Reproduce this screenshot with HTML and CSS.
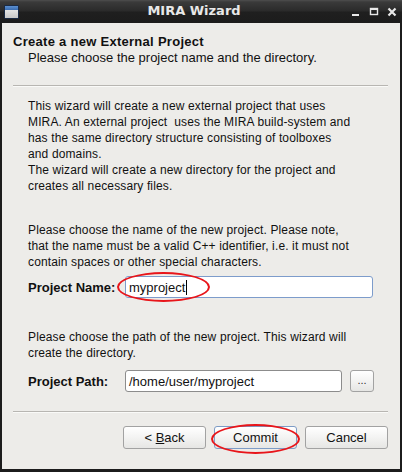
FILE: index.html
```html
<!DOCTYPE html>
<html>
<head>
<meta charset="utf-8">
<link rel="stylesheet" href="styles.css">
</head>
<body>
<div class="window">
  <div class="titlebar">
    <div class="app-icon"><div class="app-icon-top"></div></div>
    <div class="title">MIRA Wizard</div>
    <div class="controls">
      <svg class="ctl" width="10" height="10" viewBox="0 0 10 10"><rect x="1" y="7" width="7" height="2" fill="#e8e8e8"/></svg>
      <svg class="ctl" width="10" height="10" viewBox="0 0 10 10"><rect x="1.5" y="1.5" width="7" height="6" fill="none" stroke="#e8e8e8" stroke-width="1.4"/><rect x="1" y="1" width="8" height="2" fill="#e8e8e8"/></svg>
      <svg class="ctl" width="10" height="10" viewBox="0 0 10 10"><path d="M1.5 1.5 L8.5 8.5 M8.5 1.5 L1.5 8.5" stroke="#e8e8e8" stroke-width="2.2"/></svg>
    </div>
  </div>
  <div class="client">
    <div class="header">
      <div class="h-title">Create a new External Project</div>
      <div class="h-sub">Please choose the project name and the directory.</div>
    </div>
    <div class="sep"></div>
    <div class="body">
      <p class="para p1">This wizard will create a new external project that uses<br>MIRA. An external project &nbsp;uses the MIRA build-system and<br>has the same directory structure consisting of toolboxes<br>and domains.<br>The wizard will create a new directory for the project and<br>creates all necessary files.</p>
      <p class="para p2">Please choose the name of the new project. Please note,<br>that the name must be a valid C++ identifier, i.e. it must not<br>contain spaces or other special characters.</p>
      <div class="row row-name">
        <div class="label">Project Name:</div>
        <div class="input focused"><span>myproject</span><span class="caret"></span></div>
        <div class="ellipse e-name"></div>
      </div>
      <p class="para p3">Please choose the path of the new project. This wizard will<br>create the directory.</p>
      <div class="row row-path">
        <div class="label">Project Path:</div>
        <div class="input path"><span>/home/user/myproject</span></div>
        <div class="btn small">...</div>
      </div>
    </div>
    <div class="sep sep2"></div>
    <div class="buttons">
      <div class="btn"><span>&lt;&nbsp;<u>B</u>ack</span></div>
      <div class="btn default"><span>Commit</span><div class="ellipse e-commit"></div></div>
      <div class="btn"><span>Cancel</span></div>
    </div>
  </div>
</div>
</body>
</html>
```
FILE: styles.css
```css
* { box-sizing: border-box; }
html, body { margin: 0; padding: 0; }
body { width: 402px; height: 472px; overflow: hidden; background: #1a1a1a; font-family: "Liberation Sans", Arial, sans-serif; font-size: 12px; color: #111; }
.window { width: 402px; height: 472px; display: flex; flex-direction: column; background: #1c1c1c; }
.titlebar { height: 23px; display: flex; align-items: center; position: relative; background: linear-gradient(#4e4e4e 0px, #3a3a3a 2px, #2a2a2a 11px, #1f1f1f 12px, #1c1c1c 23px); }
.app-icon { width: 15px; height: 14px; margin-left: 4px; border-radius: 1px; background: linear-gradient(#f2f2f2, #c8c8c8); border: 1px solid #1a2a44; overflow: hidden; }
.app-icon-top { height: 4px; background: linear-gradient(#5a8fd0, #3b6db0); }
.title { position: absolute; left: 0; right: 0; top: 0; height: 23px; line-height: 22px; text-align: center; color: #e8e8e8; font-weight: bold; font-size: 13px; font-family: "DejaVu Sans", sans-serif; pointer-events: none; padding-right: 14px; }
.controls { margin-left: auto; display: flex; gap: 8px; margin-right: 5px; align-items: center; }
.ctl { display: block; }
.client { flex: 1; margin: 0 2px 3px 2px; background: #edece9; display: flex; flex-direction: column; }
.header { padding: 11px 0 0 11px; line-height: 16px; }
.h-title { font-weight: bold; font-size: 13px; letter-spacing: 0.28px; }
.h-sub { padding-left: 15px; font-size: 13px; }
.sep { height: 2px; margin: 19px 12px 0 11px; border-top: 1px solid #b8b6b2; border-bottom: 1px solid #fafaf8; }
.body { padding: 11px 0 0 26px; }
.para { margin: 0; line-height: 16px; letter-spacing: 0.13px; }
.p2 { margin-top: 28px; }
.p3 { margin-top: 31px; }
.row { display: flex; align-items: center; position: relative; }
.row-name { margin-top: 6px; }
.row-path { margin-top: 9px; }
.label { font-weight: bold; width: 97px; font-size: 13px; }
.input { height: 22px; background: #fff; border: 1px solid #8c8c8c; border-radius: 3px; padding-left: 3px; display: flex; align-items: center; font-size: 13px; }
.input.focused { width: 248px; border-color: #7d9ccb; }
.input.path { width: 217px; }
.caret { display: inline-block; width: 1px; height: 15px; background: #000; margin-left: 1px; }
.btn { height: 23px; display: flex; align-items: center; justify-content: center; border: 1px solid #a2a2a2; border-radius: 3px; background: linear-gradient(#ffffff, #f3f3f2 50%, #e6e6e4); position: relative; width: 83px; font-size: 13px; }
.btn.small { width: 24px; height: 22px; margin-left: 8px; font-size: 11px; color: #333; padding-bottom: 2px; }
.btn.default { border-color: #7e9cc6; }
.buttons { display: flex; justify-content: flex-end; gap: 8px; padding: 13px 12px 0 0; }
.ellipse { position: absolute; border: 2px solid #e8151a; border-radius: 50%; pointer-events: none; }
.e-name { left: 89px; top: -4px; width: 93px; height: 30px; }
.e-commit { left: -4px; top: -3px; width: 89px; height: 30px; }
```
